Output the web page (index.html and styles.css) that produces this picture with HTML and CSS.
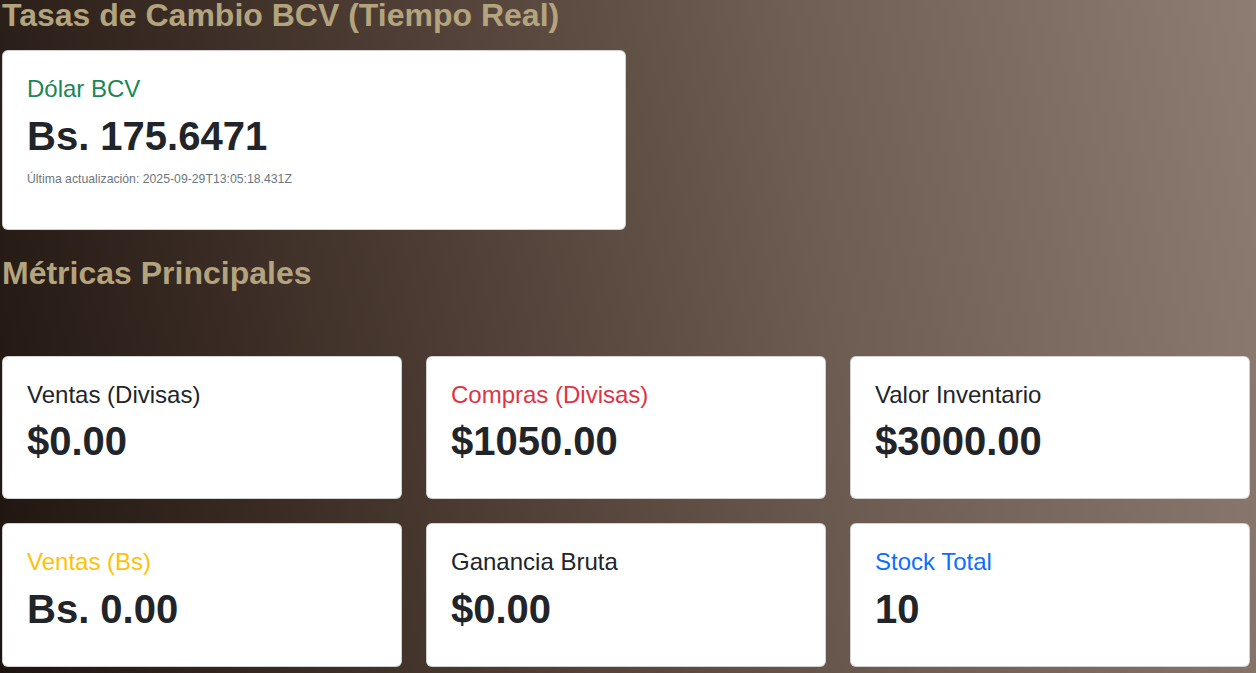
FILE: index.html
```html
<!DOCTYPE html>
<html lang="es">
<head>
<meta charset="utf-8">
<title>Dashboard</title>
<link rel="stylesheet" href="styles.css">
</head>
<body>
<main class="page">
  <h2 class="section-title first">Tasas de Cambio BCV (Tiempo Real)</h2>
  <div class="rate-row">
    <div class="card rate">
      <h4 class="card-label green">Dólar BCV</h4>
      <h2 class="card-value">Bs. 175.6471</h2>
      <p class="card-note"><small>Última actualización: 2025-09-29T13:05:18.431Z</small></p>
    </div>
  </div>

  <h2 class="section-title second">Métricas Principales</h2>
  <div class="metrics">
    <div class="card metric">
      <h4 class="card-label">Ventas (Divisas)</h4>
      <h2 class="card-value">$0.00</h2>
    </div>
    <div class="card metric">
      <h4 class="card-label red">Compras (Divisas)</h4>
      <h2 class="card-value">$1050.00</h2>
    </div>
    <div class="card metric">
      <h4 class="card-label">Valor Inventario</h4>
      <h2 class="card-value">$3000.00</h2>
    </div>
    <div class="card metric">
      <h4 class="card-label yellow">Ventas (Bs)</h4>
      <h2 class="card-value">Bs. 0.00</h2>
    </div>
    <div class="card metric">
      <h4 class="card-label">Ganancia Bruta</h4>
      <h2 class="card-value">$0.00</h2>
    </div>
    <div class="card metric">
      <h4 class="card-label blue">Stock Total</h4>
      <h2 class="card-value">10</h2>
    </div>
  </div>
</main>
</body>
</html>
```

FILE: styles.css
```css
* { box-sizing: border-box; }

html, body {
  height: 100%;
}

body {
  margin: 0;
  font-family: "Liberation Sans", Arial, sans-serif;
  font-size: 16px;
  line-height: 1.5;
  color: #212529;
  background: linear-gradient(78deg, #1e140f 0%, #4a3a31 35%, #6e5d52 65%, #8e7d72 100%);
  background-attachment: fixed;
  overflow: hidden;
}

.page {
  width: 1248px;
  margin-left: 2px;
  margin-top: -4px;
}

.section-title {
  margin: 0;
  font-size: 32px;
  font-weight: 700;
  line-height: 1.2;
  color: #b4a47e;
}

.section-title.first {
  margin-bottom: 16px;
}

.section-title.second {
  margin-top: 24px;
  margin-bottom: 63px;
}

.rate-row {
  width: 624px;
}

.card {
  background: #fff;
  border: 1px solid rgba(0, 0, 0, 0.175);
  border-radius: 6px;
  padding: 24px 24px 25px;
}

.card.rate {
  padding-bottom: 24px;
}

.card-label {
  margin: 0 0 8px;
  font-size: 24px;
  font-weight: 400;
  line-height: 1.2;
  color: #212529;
}

.card-label.green { color: #198754; }
.card-label.red { color: #dc3545; }
.card-label.yellow { color: #ffc107; }
.card-label.blue { color: #0d6efd; }

.card-value {
  margin: 0 0 8px;
  font-size: 40px;
  font-weight: 700;
  line-height: 1.2;
  color: #212529;
}

.card-note {
  margin: 0 0 16px;
  font-size: 14px;
  line-height: 1.5;
  color: #6c757d;
}

.card-note small {
  font-size: 0.875em;
}

.metrics {
  display: grid;
  grid-template-columns: repeat(3, 400px);
  column-gap: 24px;
  row-gap: 24px;
}
```
